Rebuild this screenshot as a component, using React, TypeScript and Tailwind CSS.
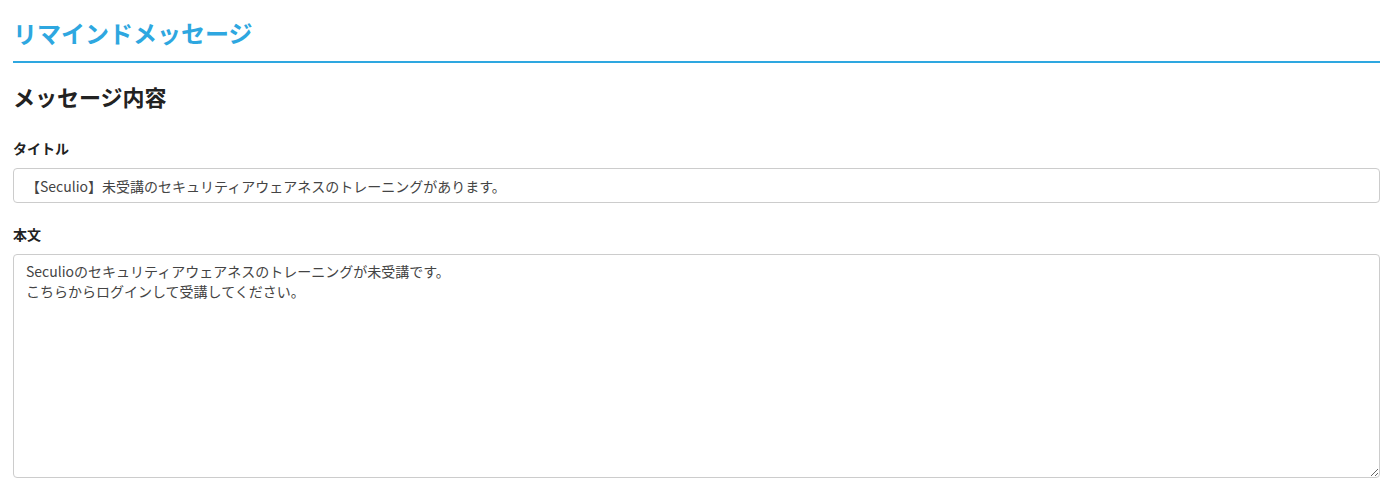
import React from "react";

const font = { fontFamily: '"Noto Sans CJK JP", "Noto Sans", sans-serif' };

function App() {
  return (
    <div className="min-h-screen bg-white pl-[13px] pr-[18px] text-[#333]" style={font}>
      <h1 className="pt-[15px] pb-[10px] text-[24px] font-bold leading-[36px] text-[#2ea7e0] border-b-2 border-[#2ea7e0]">
        リマインドメッセージ
      </h1>
      <h2 className="mt-[18px] text-[22px] font-bold leading-[30px] text-[#222]">
        メッセージ内容
      </h2>
      <div className="mt-[27px]">
        <label className="block text-[14px] font-bold leading-[20px] text-[#222]">
          タイトル
        </label>
        <input
          className="mt-[10px] block h-[35px] w-full rounded-[4px] border border-[#ccc] px-[12px] text-[14px] text-[#444] outline-none"
          defaultValue="【Seculio】未受講のセキュリティアウェアネスのトレーニングがあります。"
          style={font}
        />
      </div>
      <div className="mt-[21px]">
        <label className="block text-[14px] font-bold leading-[20px] text-[#222]">
          本文
        </label>
        <textarea
          className="mt-[10px] block h-[224px] w-full rounded-[4px] border border-[#ccc] px-[12px] py-[6px] text-[14px] leading-[20px] text-[#444] outline-none"
          defaultValue={"Seculioのセキュリティアウェアネスのトレーニングが未受講です。\nこちらからログインして受講してください。"}
          style={font}
        />
      </div>
    </div>
  );
}

export default App;
